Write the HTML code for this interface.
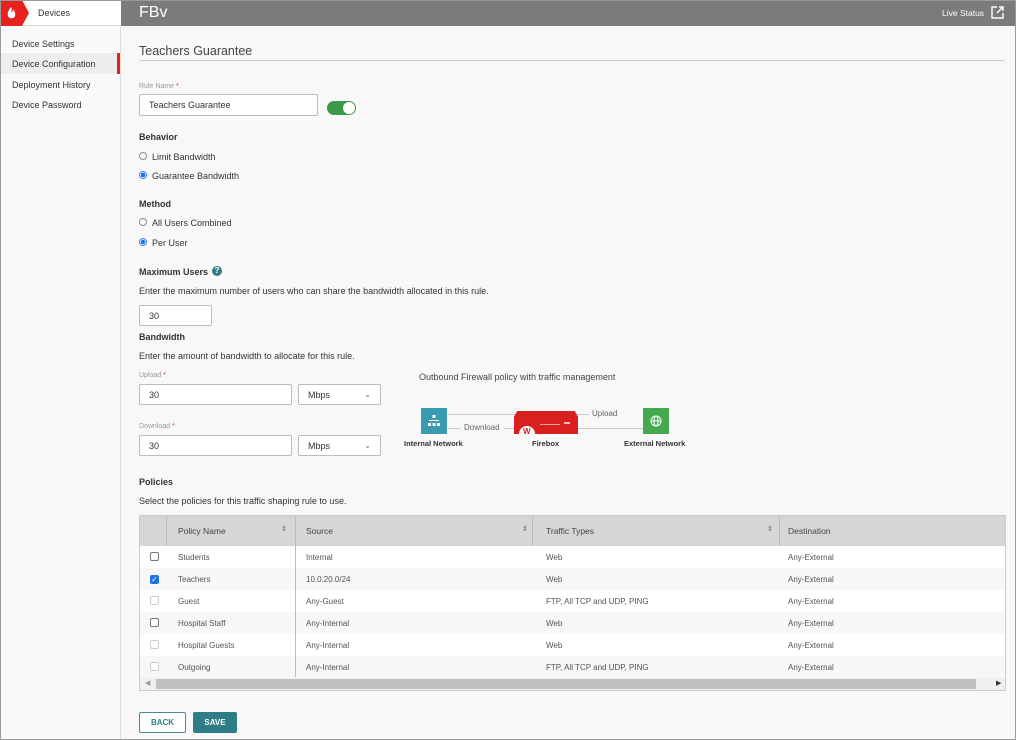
<!DOCTYPE html>
<html><head><meta charset="utf-8"><style>
*{box-sizing:border-box;margin:0;padding:0}
body{width:1016px;height:740px;position:relative;overflow:hidden;font-family:"Liberation Sans",sans-serif;font-size:9px;color:#333;background:#f8f8f8}
.a{position:absolute}
.frame{left:0;top:0;width:1016px;height:740px;border:1px solid #999;z-index:10;pointer-events:none}
.side{left:0;top:0;width:121px;height:740px;background:#fafafa;border-right:1px solid #ddd}
.top{left:121px;top:0;width:895px;height:26px;background:#7b7b7b;color:#fff}
.inp{background:#fff;border:1px solid #bbb;border-radius:2px;padding-left:9px;font-size:9px;display:flex;align-items:center}
.lbl{font-size:7px;color:#999}
.lbl b{color:#d33;font-weight:normal}
.h{font-weight:bold;font-size:9px;color:#333}
.radio{width:8px;height:8px;border:1px solid #888;border-radius:50%;background:#fff}
.radio.on{border-color:#3b82f6;background:radial-gradient(circle,#1a73e8 0 2px,#fff 2.5px)}
table{border-collapse:collapse;font-size:8px}
td{height:22px;color:#555}
.cb{width:9px;height:9px;border:1px solid #777;border-radius:2px;background:#fff;display:inline-block}
.cb.dis{border-color:#ccc}
</style></head><body>
<div class="a side"></div>
<div class="a" style="left:0;top:0;width:121px;height:26px;background:#fff;border-bottom:1px solid #ddd"></div>
<svg class="a" style="left:0;top:0" width="30" height="26"><polygon points="0,0 22,0 29,13 22,26 0,26" fill="#e8201e"/><path d="M11 7 C9 10 7 12 8 16 C9 19 14 19 15 16 C16 13 14 11 13 9 C13 12 12 12 11 12 C12 10 12 8 11 7Z" fill="#fff"/></svg>
<div class="a" style="left:38px;top:8px;font-size:9px">Devices</div>
<div class="a" style="left:0;top:53px;width:120px;height:21px;background:#eee"></div>
<div class="a" style="left:117px;top:53px;width:3px;height:21px;background:#e8201e"></div>
<div class="a" style="left:12px;top:39px">Device Settings</div>
<div class="a" style="left:12px;top:59px">Device Configuration</div>
<div class="a" style="left:12px;top:80px">Deployment History</div>
<div class="a" style="left:12px;top:100px">Device Password</div>
<div class="a top"><div class="a" style="left:18px;top:4px;font-size:16px">FBv</div>
<div class="a" style="left:821px;top:8px;font-size:8.5px">Live Status</div>
<svg class="a" style="left:870px;top:6px" width="13" height="13" fill="none" stroke="#fff" stroke-width="1.4"><path d="M6 1H1V12H12V7"/><path d="M8 1H12V5M12 1L6 7"/></svg></div>
<div class="a" style="left:139px;top:44px;font-size:12.5px;color:#444">Teachers Guarantee</div>
<div class="a" style="left:139px;top:60px;width:866px;height:1px;background:#ccc"></div>
<div class="a lbl" style="left:139px;top:83px">Rule Name <b>*</b></div>
<div class="a inp" style="left:139px;top:94px;width:179px;height:22px">Teachers Guarantee</div>
<div class="a" style="left:327px;top:101px;width:29px;height:14px;border-radius:7px;background:#3a9c48"><div class="a" style="left:16px;top:1px;width:12px;height:12px;border-radius:50%;background:#fff"></div></div>
<div class="a h" style="left:139px;top:132px">Behavior</div>
<div class="a radio" style="left:139px;top:152px"></div><div class="a" style="left:152px;top:152px">Limit Bandwidth</div>
<div class="a radio on" style="left:139px;top:171px"></div><div class="a" style="left:152px;top:171px">Guarantee Bandwidth</div>
<div class="a h" style="left:139px;top:199px">Method</div>
<div class="a radio" style="left:139px;top:218px"></div><div class="a" style="left:152px;top:218px">All Users Combined</div>
<div class="a radio on" style="left:139px;top:238px"></div><div class="a" style="left:152px;top:238px">Per User</div>
<div class="a h" style="left:139px;top:267px">Maximum Users</div>
<div class="a" style="left:212px;top:266px;width:10px;height:10px;border-radius:50%;background:#2f7d86;color:#fff;font-size:8px;font-weight:bold;text-align:center;line-height:10px">?</div>
<div class="a" style="left:139px;top:286px">Enter the maximum number of users who can share the bandwidth allocated in this rule.</div>
<div class="a inp" style="left:139px;top:305px;width:73px;height:21px">30</div>
<div class="a h" style="left:139px;top:332px">Bandwidth</div>
<div class="a" style="left:139px;top:351px">Enter the amount of bandwidth to allocate for this rule.</div>
<div class="a lbl" style="left:139px;top:372px">Upload <b>*</b></div>
<div class="a inp" style="left:139px;top:384px;width:153px;height:21px">30</div>
<div class="a inp" style="left:298px;top:384px;width:83px;height:21px;justify-content:space-between;padding-right:9px">Mbps<span style="color:#2f7d86;font-size:8px">&#8964;</span></div>
<div class="a lbl" style="left:139px;top:423px">Download <b>*</b></div>
<div class="a inp" style="left:139px;top:435px;width:153px;height:21px">30</div>
<div class="a inp" style="left:298px;top:435px;width:83px;height:21px;justify-content:space-between;padding-right:9px">Mbps<span style="color:#2f7d86;font-size:8px">&#8964;</span></div>
<div class="a" style="left:419px;top:372px;color:#444">Outbound Firewall policy with traffic management</div>
<div class="a" style="left:448px;top:414px;width:170px;height:1px;background:#ccc"></div>
<div class="a" style="left:448px;top:428px;width:195px;height:1px;background:#ccc"></div>
<div class="a" style="left:421px;top:408px;width:26px;height:26px;background:#3a9bb0"></div>
<svg class="a" style="left:428px;top:415px" width="12" height="12" fill="#fff"><rect x="4.5" y="0" width="3" height="3"/><rect x="0" y="8" width="3" height="3"/><rect x="4.5" y="8" width="3" height="3"/><rect x="9" y="8" width="3" height="3"/><rect x="1" y="5" width="10" height="1"/></svg>
<div class="a" style="left:643px;top:408px;width:26px;height:26px;background:#46a84f"></div>
<svg class="a" style="left:650px;top:415px" width="12" height="12" fill="none" stroke="#fff" stroke-width="1"><circle cx="6" cy="6" r="5"/><ellipse cx="6" cy="6" rx="2" ry="5"/><path d="M1 6H11"/></svg>
<div class="a" style="left:514px;top:411px;width:64px;height:23px;background:#d9201f;clip-path:polygon(5% 0,95% 0,100% 25%,100% 100%,0 100%,0 25%)"></div>
<svg class="a" style="left:518px;top:420px" width="56" height="14"><circle cx="9" cy="14" r="8" fill="#fff"/><text x="5" y="14" font-size="8" font-weight="bold" fill="#d9201f" font-family="Liberation Sans">W</text><rect x="22" y="4" width="20" height="1" fill="#fff" opacity=".6"/><rect x="46" y="2" width="6" height="2" fill="#fff" opacity=".7"/></svg>
<div class="a" style="left:461px;top:423px;padding:0 3px;background:#f8f8f8;color:#666;font-size:8px">Download</div>
<div class="a" style="left:589px;top:409px;padding:0 3px;background:#f8f8f8;color:#666;font-size:8px">Upload</div>
<div class="a h" style="left:404px;top:439px;font-size:7.5px">Internal Network</div>
<div class="a h" style="left:532px;top:439px;font-size:7.5px">Firebox</div>
<div class="a h" style="left:624px;top:439px;font-size:7.5px">External Network</div>
<div class="a h" style="left:139px;top:477px">Policies</div>
<div class="a" style="left:139px;top:496px">Select the policies for this traffic shaping rule to use.</div>
<div class="a" style="left:139px;top:515px;width:867px;height:176px;border:1px solid #ccc;background:#fff">
<div class="a" style="left:0;top:0;width:865px;height:30px;background:#d6d6d6"></div>
<table class="a" style="left:0;top:30px;width:865px">
<tr><td style="width:26px;padding-left:10px"><span class="cb"></span></td><td style="width:129px;padding-left:12px">Students</td><td style="width:237px;padding-left:11px">Internal</td><td style="width:247px;padding-left:14px">Web</td><td style="padding-left:9px">Any-External</td></tr>
<tr style="background:#f7f7f7"><td style="padding-left:10px"><span class="cb" style="background:#1a73e8;border-color:#1a73e8;color:#fff;font-size:8px;line-height:8px;text-align:center">&#10003;</span></td><td style="padding-left:12px">Teachers</td><td style="padding-left:11px">10.0.20.0/24</td><td style="padding-left:14px">Web</td><td style="padding-left:9px">Any-External</td></tr>
<tr><td style="padding-left:10px"><span class="cb dis"></span></td><td style="padding-left:12px">Guest</td><td style="padding-left:11px">Any-Guest</td><td style="padding-left:14px">FTP, All TCP and UDP, PING</td><td style="padding-left:9px">Any-External</td></tr>
<tr style="background:#f7f7f7"><td style="padding-left:10px"><span class="cb"></span></td><td style="padding-left:12px">Hospital Staff</td><td style="padding-left:11px">Any-Internal</td><td style="padding-left:14px">Web</td><td style="padding-left:9px">Any-External</td></tr>
<tr><td style="padding-left:10px"><span class="cb dis"></span></td><td style="padding-left:12px">Hospital Guests</td><td style="padding-left:11px">Any-Internal</td><td style="padding-left:14px">Web</td><td style="padding-left:9px">Any-External</td></tr>
<tr style="background:#f7f7f7"><td style="padding-left:10px"><span class="cb dis"></span></td><td style="padding-left:12px">Outgoing</td><td style="padding-left:11px">Any-Internal</td><td style="padding-left:14px">FTP, All TCP and UDP, PING</td><td style="padding-left:9px">Any-External</td></tr>
</table>
<div class="a" style="left:26px;top:0;width:1px;height:30px;background:#bbb"></div>
<div class="a" style="left:155px;top:0;width:1px;height:161px;background:#bbb"></div>
<div class="a" style="left:392px;top:0;width:1px;height:30px;background:#bbb"></div>
<div class="a" style="left:639px;top:0;width:1px;height:30px;background:#bbb"></div>
<div class="a" style="left:38px;top:10px;font-size:8.5px;color:#444">Policy Name</div><div class="a" style="left:141px;top:9px;font-size:7px;color:#666">&#8661;</div>
<div class="a" style="left:166px;top:10px;font-size:8.5px;color:#444">Source</div><div class="a" style="left:382px;top:9px;font-size:7px;color:#666">&#8661;</div>
<div class="a" style="left:406px;top:10px;font-size:8.5px;color:#444">Traffic Types</div><div class="a" style="left:627px;top:9px;font-size:7px;color:#666">&#8661;</div>
<div class="a" style="left:648px;top:10px;font-size:8.5px;color:#444">Destination</div>
<div class="a" style="left:0;top:162px;width:865px;height:12px;background:#f0f0f0"></div>
<div class="a" style="left:16px;top:163px;width:820px;height:10px;background:#c1c1c1"></div>
<div class="a" style="left:5px;top:163px;font-size:7px;color:#999">&#9664;</div>
<div class="a" style="left:856px;top:163px;font-size:7px;color:#333">&#9654;</div>
</div>
<div class="a" style="left:139px;top:712px;width:47px;height:21px;border:1px solid #4a8a94;border-radius:2px;background:#fff;color:#2f7d86;font-weight:bold;font-size:8px;text-align:center;line-height:19px">BACK</div>
<div class="a" style="left:193px;top:712px;width:44px;height:21px;border-radius:2px;background:#2f7d86;color:#fff;font-weight:bold;font-size:8px;text-align:center;line-height:21px">SAVE</div>
<div class="a frame"></div>
</body></html>
